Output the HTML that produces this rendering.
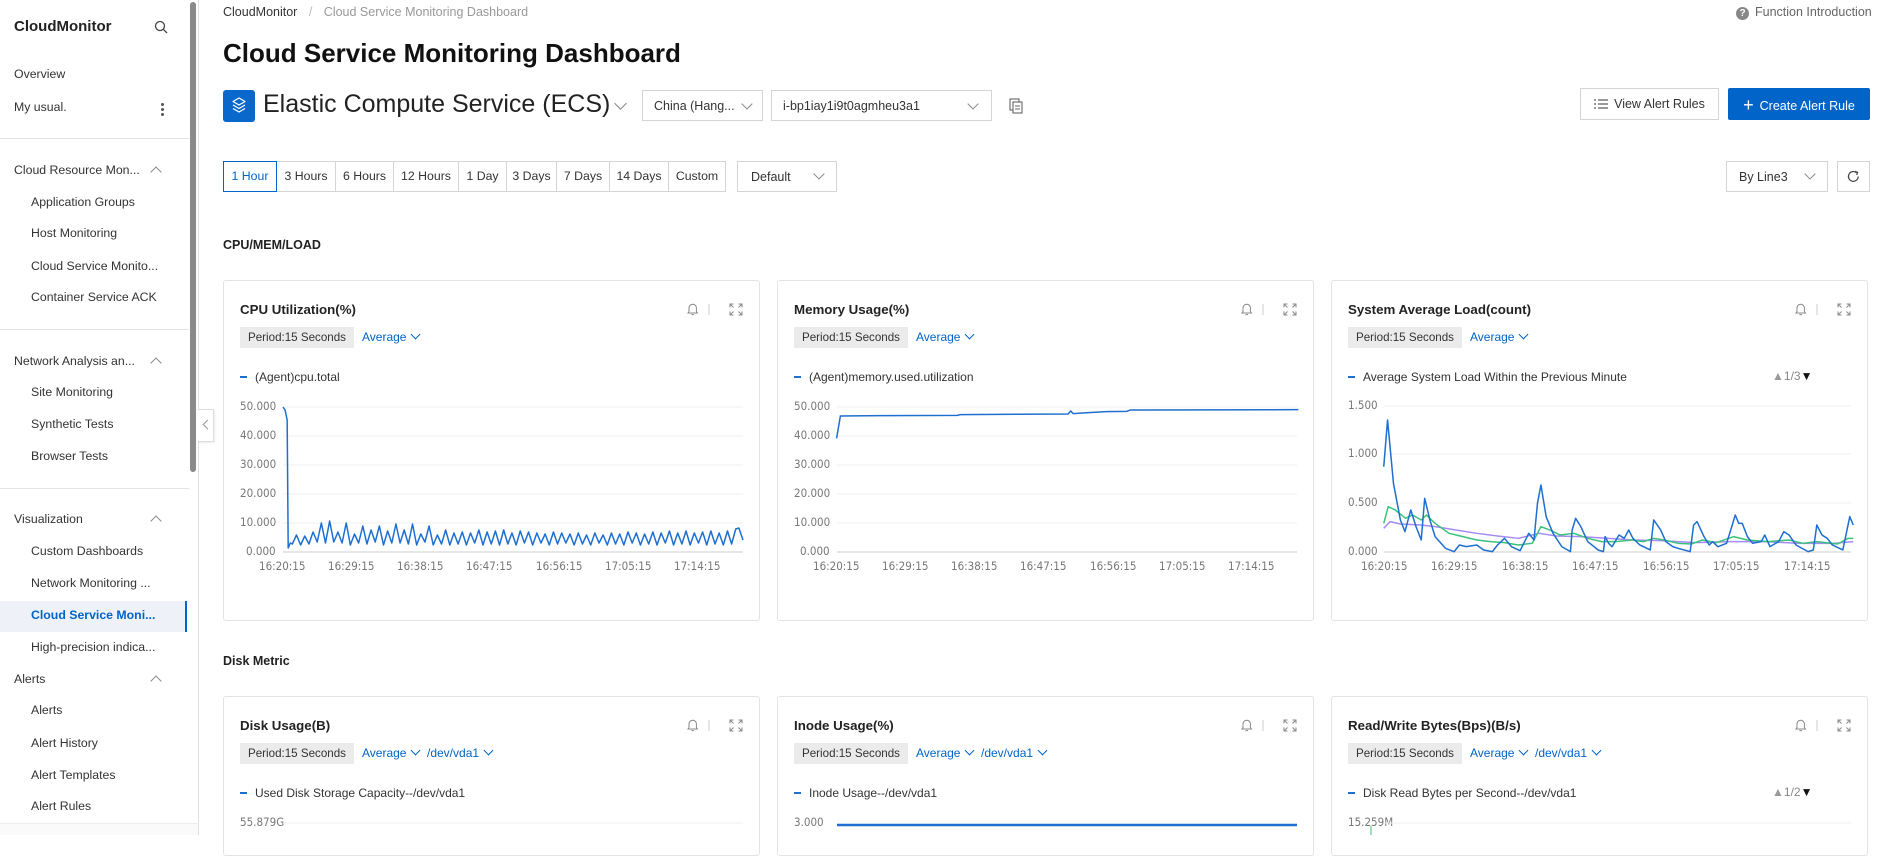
<!DOCTYPE html>
<html><head><meta charset="utf-8">
<style>
*{margin:0;padding:0;box-sizing:border-box}
body{width:1884px;height:835px;overflow:hidden;background:#fff;font-family:"Liberation Sans",Arial,sans-serif;color:#333;position:relative}
.a{position:absolute;white-space:nowrap}
.sb{font-size:12.3px;color:#333}
.sub{left:31px}
.sec{left:14px}
.chev{position:absolute;left:152px;width:8px;height:8px;border-left:1.3px solid #888;border-top:1.3px solid #888;transform:rotate(45deg)}
.hr{position:absolute;left:0;width:189px;height:1px;background:#e3e3e3}
.btn{position:absolute;border:1px solid #d5d5d5;background:#fff;font-size:12.5px;display:flex;align-items:center;color:#333}
.dd{position:absolute;width:8px;height:8px;border-right:1.3px solid #888;border-bottom:1.3px solid #888;transform:rotate(45deg)}
.card{position:absolute;border:1px solid #e3e3e3;border-radius:3px;background:#fff;width:537px}
.ct{position:absolute;left:17px;font-size:13.3px;font-weight:bold;color:#222}
.per{position:absolute;left:17px;height:21px;background:#ebebeb;font-size:11.6px;line-height:21px;padding:0 8px;color:#333}
.avg{position:absolute;font-size:12px;color:#0064c8}
.avg i{display:inline-block;width:7px;height:7px;border-right:1.3px solid #0064c8;border-bottom:1.3px solid #0064c8;transform:rotate(45deg);margin-left:6px;position:relative;top:-3px}
.lg{position:absolute;left:17px;font-size:12px;color:#333}
.lg b{display:inline-block;width:7px;height:2px;background:#1e6fd0;vertical-align:middle;margin-right:8px;position:relative;top:-1px}
.ax{position:absolute;font-size:11.5px;color:#777;font-family:"DejaVu Sans Condensed","Liberation Sans",sans-serif}
.tb{position:absolute;top:161px;height:31px;border:1px solid #d5d5d5;font-size:12.3px;line-height:29px;text-align:center;color:#333;background:#fff}
</style></head><body>

<!-- Sidebar -->
<div class="a" style="left:14px;top:18px;font-size:15px;font-weight:bold;color:#222">CloudMonitor</div>
<svg class="a" style="left:154px;top:20px" width="14" height="14" viewBox="0 0 14 14"><circle cx="6" cy="6" r="4.5" fill="none" stroke="#444" stroke-width="1.3"/><line x1="9.3" y1="9.3" x2="13" y2="13" stroke="#444" stroke-width="1.3"/></svg>
<div class="a sb sec" style="top:67px">Overview</div>
<div class="a sb sec" style="top:100px">My usual.</div>
<div class="a" style="left:161px;top:103px;width:3px;height:3px;border-radius:50%;background:#555;box-shadow:0 5px 0 #555,0 10px 0 #555"></div>
<div class="hr" style="top:138px"></div>
<div class="a sb sec" style="top:163px">Cloud Resource Mon...</div><div class="chev" style="top:168px"></div>
<div class="a sb sub" style="top:195px">Application Groups</div>
<div class="a sb sub" style="top:226px">Host Monitoring</div>
<div class="a sb sub" style="top:259px">Cloud Service Monito...</div>
<div class="a sb sub" style="top:290px">Container Service ACK</div>
<div class="hr" style="top:329px"></div>
<div class="a sb sec" style="top:354px">Network Analysis an...</div><div class="chev" style="top:359px"></div>
<div class="a sb sub" style="top:385px">Site Monitoring</div>
<div class="a sb sub" style="top:417px">Synthetic Tests</div>
<div class="a sb sub" style="top:449px">Browser Tests</div>
<div class="hr" style="top:488px"></div>
<div class="a sb sec" style="top:512px">Visualization</div><div class="chev" style="top:517px"></div>
<div class="a sb sub" style="top:544px">Custom Dashboards</div>
<div class="a sb sub" style="top:576px">Network Monitoring ...</div>
<div class="a" style="left:0;top:601px;width:187px;height:31px;background:#eef1f7;border-right:2px solid #0064c8"></div>
<div class="a sb sub" style="top:608px;color:#0064c8;font-weight:bold">Cloud Service Moni...</div>
<div class="a sb sub" style="top:640px">High-precision indica...</div>
<div class="a sb sec" style="top:672px">Alerts</div><div class="chev" style="top:677px"></div>
<div class="a sb sub" style="top:703px">Alerts</div>
<div class="a sb sub" style="top:736px">Alert History</div>
<div class="a sb sub" style="top:768px">Alert Templates</div>
<div class="a sb sub" style="top:799px">Alert Rules</div>
<div class="a" style="left:0;top:823px;width:198px;height:12px;background:#fafafa;border-top:1px solid #eee"></div>
<div class="a" style="left:190px;top:2px;width:6px;height:470px;background:#8a8a8a;border-radius:3px"></div>
<div class="a" style="left:198px;top:0;width:1px;height:835px;background:#e0e0e0"></div>
<div class="a" style="left:198px;top:409px;width:16px;height:33px;border:1px solid #ddd;border-left:none;background:#fff;box-shadow:1px 1px 2px rgba(0,0,0,.08)"></div>
<div class="a" style="left:204px;top:421px;width:7px;height:7px;border-left:1.3px solid #999;border-bottom:1.3px solid #999;transform:rotate(45deg)"></div>

<!-- Header -->
<div class="a" style="left:223px;top:5px;font-size:12.5px;color:#333">CloudMonitor <span style="color:#bbb;margin:0 8px">/</span> <span style="color:#999">Cloud Service Monitoring Dashboard</span></div>
<div class="a" style="left:1736px;top:5px;font-size:12.5px;color:#666"><span style="display:inline-block;width:13px;height:13px;border-radius:50%;background:#888;color:#fff;font-size:10px;text-align:center;line-height:13px;font-weight:bold;margin-right:6px">?</span>Function Introduction</div>
<div class="a" style="left:223px;top:38px;font-size:26px;font-weight:bold;color:#111">Cloud Service Monitoring Dashboard</div>

<div class="a" style="left:223px;top:90px;width:32px;height:32px;background:#0a67cc;border-radius:3px"></div>
<svg class="a" style="left:229px;top:95px" width="20" height="22" viewBox="0 0 20 22"><g fill="none" stroke="#fff" stroke-width="1.3" stroke-linejoin="round"><path d="M10 3 L16 6.5 L10 10 L4 6.5 Z"/><path d="M4 10 L10 13.5 L16 10"/><path d="M4 13.5 L10 17 L16 13.5"/></g></svg>
<div class="a" style="left:263px;top:90px;font-size:25px;color:#222">Elastic Compute Service (ECS)</div>
<div class="dd" style="left:616px;top:99px;width:9px;height:9px"></div>
<div class="btn" style="left:642px;top:90px;width:121px;height:31px;padding-left:11px">China (Hang...</div><div class="dd" style="left:743px;top:100px"></div>
<div class="btn" style="left:771px;top:90px;width:221px;height:31px;padding-left:11px">i-bp1iay1i9t0agmheu3a1</div><div class="dd" style="left:969px;top:100px"></div>
<svg class="a" style="left:1009px;top:98px" width="15" height="16" viewBox="0 0 15 16"><rect x="1" y="1" width="9" height="11" fill="none" stroke="#666" stroke-width="1.1"/><rect x="4" y="4" width="9" height="11" fill="#fff" stroke="#666" stroke-width="1.1"/><line x1="6" y1="8" x2="11" y2="8" stroke="#666"/><line x1="6" y1="11" x2="11" y2="11" stroke="#666"/></svg>

<div class="btn" style="left:1580px;top:88px;width:139px;height:32px;justify-content:center"><svg width="14" height="12" style="margin-right:6px" viewBox="0 0 14 12"><g stroke="#555" stroke-width="1.2"><line x1="0" y1="2" x2="2" y2="2"/><line x1="4" y1="2" x2="14" y2="2"/><line x1="0" y1="6" x2="2" y2="6"/><line x1="4" y1="6" x2="14" y2="6"/><line x1="0" y1="10" x2="2" y2="10"/><line x1="4" y1="10" x2="14" y2="10"/></g></svg>View Alert Rules</div>
<div class="a" style="left:1728px;top:88px;width:142px;height:32px;background:#0064c8;border-radius:2px;color:#fff;font-size:12.5px;line-height:32px;text-align:center"><span style="font-size:18px;font-weight:300;margin-right:6px;position:relative;top:1px">+</span>Create Alert Rule</div>

<!-- time range -->
<div class="tb" style="left:223px;width:54px;border-color:#0064c8;color:#0064c8;z-index:2">1 Hour</div>
<div class="tb" style="left:276px;width:60px">3 Hours</div>
<div class="tb" style="left:335px;width:59px">6 Hours</div>
<div class="tb" style="left:393px;width:66px">12 Hours</div>
<div class="tb" style="left:458px;width:49px">1 Day</div>
<div class="tb" style="left:506px;width:51px">3 Days</div>
<div class="tb" style="left:556px;width:54px">7 Days</div>
<div class="tb" style="left:609px;width:60px">14 Days</div>
<div class="tb" style="left:668px;width:58px">Custom</div>
<div class="btn" style="left:737px;top:161px;width:100px;height:31px;padding-left:13px">Default</div><div class="dd" style="left:815px;top:170px"></div>
<div class="btn" style="left:1726px;top:161px;width:102px;height:31px;padding-left:12px">By Line3</div><div class="dd" style="left:1806px;top:170px"></div>
<div class="btn" style="left:1837px;top:161px;width:33px;height:31px;justify-content:center"><svg width="15" height="15" viewBox="0 0 16 16"><path d="M13 8 A5.2 5.2 0 1 1 11.3 4.1" fill="none" stroke="#444" stroke-width="1.3"/><path d="M9.5 2.5 L12.3 3.6 L11.5 6.5" fill="none" stroke="#444" stroke-width="1.3"/></svg></div>

<div class="a" style="left:223px;top:238px;font-size:12.5px;font-weight:bold;color:#222">CPU/MEM/LOAD</div>
<div class="a" style="left:223px;top:654px;font-size:12.5px;font-weight:bold;color:#222">Disk Metric</div>

<!-- Cards -->
<div class="card" style="left:223px;top:280px;height:341px"></div>
<div class="card" style="left:777px;top:280px;height:341px"></div>
<div class="card" style="left:1331px;top:280px;height:341px"></div>
<div class="card" style="left:223px;top:696px;height:160px"></div>
<div class="card" style="left:777px;top:696px;height:160px"></div>
<div class="card" style="left:1331px;top:696px;height:160px"></div>

<div class="a" style="left:223px;top:280px;width:537px;height:341px">
 <div class="ct" style="top:22px">CPU Utilization(%)</div>
 <div class="per" style="top:47px">Period:15 Seconds</div><div class="avg" style="left:139px;top:50px">Average<i></i></div>
 <div class="lg" style="top:90px"><b></b>(Agent)cpu.total</div>
</div>
<div class="a" style="left:777px;top:280px;width:537px;height:341px">
 <div class="ct" style="top:22px">Memory Usage(%)</div>
 <div class="per" style="top:47px">Period:15 Seconds</div><div class="avg" style="left:139px;top:50px">Average<i></i></div>
 <div class="lg" style="top:90px"><b></b>(Agent)memory.used.utilization</div>
</div>
<div class="a" style="left:1331px;top:280px;width:537px;height:341px">
 <div class="ct" style="top:22px">System Average Load(count)</div>
 <div class="per" style="top:47px">Period:15 Seconds</div><div class="avg" style="left:139px;top:50px">Average<i></i></div>
 <div class="lg" style="top:90px"><b></b>Average System Load Within the Previous Minute</div>
 <div class="a" style="left:441px;top:89px;font-size:12px;color:#888"><span style="color:#999">▲</span>1/3<span style="color:#111">▼</span></div>
</div>
<div class="a" style="left:223px;top:696px;width:537px;height:140px">
 <div class="ct" style="top:22px">Disk Usage(B)</div>
 <div class="per" style="top:47px">Period:15 Seconds</div><div class="avg" style="left:139px;top:50px">Average<i></i></div><div class="avg" style="left:204px;top:50px">/dev/vda1<i></i></div>
 <div class="lg" style="top:90px"><b></b>Used Disk Storage Capacity--/dev/vda1</div>
 <div class="ax" style="left:17px;top:119px">55.879G</div>
</div>
<div class="a" style="left:777px;top:696px;width:537px;height:140px">
 <div class="ct" style="top:22px">Inode Usage(%)</div>
 <div class="per" style="top:47px">Period:15 Seconds</div><div class="avg" style="left:139px;top:50px">Average<i></i></div><div class="avg" style="left:204px;top:50px">/dev/vda1<i></i></div>
 <div class="lg" style="top:90px"><b></b>Inode Usage--/dev/vda1</div>
 <div class="ax" style="left:17px;top:119px">3.000</div>
</div>
<div class="a" style="left:1331px;top:696px;width:537px;height:140px">
 <div class="ct" style="top:22px">Read/Write Bytes(Bps)(B/s)</div>
 <div class="per" style="top:47px">Period:15 Seconds</div><div class="avg" style="left:139px;top:50px">Average<i></i></div><div class="avg" style="left:204px;top:50px">/dev/vda1<i></i></div>
 <div class="lg" style="top:90px"><b></b>Disk Read Bytes per Second--/dev/vda1</div>
 <div class="a" style="left:441px;top:89px;font-size:12px;color:#888"><span style="color:#999">▲</span>1/2<span style="color:#111">▼</span></div>
 <div class="ax" style="left:17px;top:119px">15.259M</div>
</div>

<svg class="a" style="left:0;top:0" width="1884" height="835">
 <defs>
  <g id="ic">
   <path d="M0 9 L1 7.6 L1 4 A3.7 3.7 0 0 1 8.4 4 L8.4 7.6 L9.4 9 Z M3.4 10.6 L6 10.6" fill="none" stroke="#888" stroke-width="1"/>
   <line x1="21" y1="0" x2="21" y2="11" stroke="#ccc"/>
   <g fill="none" stroke="#888" stroke-width="1"><path d="M42 3.5 L42 0 L45.5 0 M42 0 L45.5 3.5"/><path d="M54 3.5 L54 0 L50.5 0 M54 0 L50.5 3.5"/><path d="M42 7.5 L42 11 L45.5 11 M42 11 L45.5 7.5"/><path d="M54 7.5 L54 11 L50.5 11 M54 11 L50.5 7.5"/></g>
  </g>
 </defs>
 <use href="#ic" x="688" y="304"/><use href="#ic" x="1242" y="304"/><use href="#ic" x="1796" y="304"/>
 <use href="#ic" x="688" y="720"/><use href="#ic" x="1242" y="720"/><use href="#ic" x="1796" y="720"/>

 <g stroke="#efefef" stroke-width="1">
  <line x1="283" y1="407" x2="743" y2="407"/><line x1="283" y1="436" x2="743" y2="436"/><line x1="283" y1="465" x2="743" y2="465"/><line x1="283" y1="494" x2="743" y2="494"/><line x1="283" y1="523" x2="743" y2="523"/>
  <line x1="837" y1="407" x2="1297" y2="407"/><line x1="837" y1="436" x2="1297" y2="436"/><line x1="837" y1="465" x2="1297" y2="465"/><line x1="837" y1="494" x2="1297" y2="494"/><line x1="837" y1="523" x2="1297" y2="523"/>
  <line x1="1384" y1="406" x2="1851" y2="406"/><line x1="1384" y1="454" x2="1851" y2="454"/><line x1="1384" y1="503" x2="1851" y2="503"/>
  <line x1="283" y1="823" x2="743" y2="823"/><line x1="1384" y1="823" x2="1851" y2="823"/>
 </g>
 <g stroke="#ddd" stroke-width="1.5"><line x1="283" y1="552" x2="743" y2="552"/><line x1="837" y1="552" x2="1297" y2="552"/><line x1="1384" y1="552" x2="1851" y2="552"/></g>

 <g transform="translate(-8.1,0) scale(1.036,1)">
 <polyline fill="none" stroke="#1e6fd0" stroke-width="1.5" vector-effect="non-scaling-stroke" stroke-linejoin="round" points="281,407 283,410 285,420 286,548 288,543 290,544 294,535 298,545 302,536 306,544 310,532 314,542 318,523 322,543 326,521 330,542 334,532 338,543 342,523 346,545 350,534 354,543 358,526 362,544 366,530 370,542 374,526 378,545 382,531 386,543 390,524 394,543 398,530 402,544 406,524 410,545 414,534 418,542 422,526 426,545 430,535 434,544 438,530 442,545 446,533 450,544 454,532 458,545 462,533 466,543 470,530 474,545 478,532 482,544 486,531 490,545 494,530 498,544 502,533 506,545 510,531 514,543 518,532 522,545 526,533 530,543 534,534 538,545 542,532 546,544 550,533 554,543 558,534 562,545 566,533 570,544 574,535 578,545 582,533 586,543 590,535 594,545 598,533 602,544 606,534 610,545 614,532 618,543 622,533 626,545 630,534 634,544 638,532 642,545 646,533 650,543 654,531 658,545 662,533 666,544 670,531 674,545 678,533 682,543 686,532 690,545 694,531 698,544 702,533 706,545 710,531 714,544 718,529 721,528 725,540"/>
 </g>
 <g transform="translate(777,280) scale(0.3464,0.3333)"><polyline fill="none" stroke="#1e6fd0" stroke-width="1.5" vector-effect="non-scaling-stroke" points="172,475 183,408 300,407 520,406 530,404 840,402 848,393 855,401 900,398 950,395 1010,394 1020,390 1505,389"/></g>
 <g transform="translate(1331,360) scale(0.347,0.3333)" fill="none" stroke-width="1.5" stroke-linejoin="round">
  <polyline vector-effect="non-scaling-stroke" stroke="#a48cf4" points="152,505 170,485 200,492 260,495 300,500 360,510 420,520 480,528 540,535 600,520 650,528 720,530 800,535 870,540 950,542 1050,548 1150,545 1250,545 1350,550 1450,550 1505,545"/>
  <polyline vector-effect="non-scaling-stroke" stroke="#3cc17a" points="152,490 165,440 185,450 215,475 235,465 260,480 275,465 300,490 340,520 380,530 420,540 460,545 500,548 540,555 580,550 605,500 630,510 660,525 700,520 740,535 780,545 820,545 870,540 900,545 930,535 960,540 1000,550 1040,552 1070,540 1110,548 1160,530 1200,540 1260,545 1320,540 1360,550 1400,545 1460,552 1490,535 1505,535"/>
  <polyline vector-effect="non-scaling-stroke" stroke="#1e6fd0" points="152,320 163,180 180,370 200,480 213,515 230,450 245,500 260,540 270,415 285,480 300,530 330,565 355,575 370,555 390,560 420,555 440,570 465,575 480,555 500,535 520,560 545,572 570,520 585,540 595,430 605,375 620,470 640,520 665,560 690,575 695,510 705,475 720,500 740,545 770,570 785,575 790,530 800,550 810,560 830,525 845,535 858,510 870,535 890,555 920,570 930,480 950,510 965,545 985,560 1000,565 1035,575 1045,495 1055,485 1075,530 1090,555 1100,545 1115,560 1140,550 1155,500 1165,465 1175,490 1185,490 1200,530 1215,550 1240,545 1250,525 1265,560 1290,545 1305,515 1320,525 1340,555 1375,575 1390,570 1400,495 1415,525 1430,535 1445,555 1475,570 1485,520 1495,470 1505,495"/>
 </g>
 <line x1="837" y1="825" x2="1297" y2="825" stroke="#1e6fd0" stroke-width="2.5"/>
 <line x1="1371" y1="826" x2="1371" y2="835" stroke="#3cc17a" stroke-width="1"/>
</svg>

<div class="ax" style="left:240px;top:399px">50.000</div><div class="ax" style="left:240px;top:428px">40.000</div><div class="ax" style="left:240px;top:457px">30.000</div><div class="ax" style="left:240px;top:486px">20.000</div><div class="ax" style="left:240px;top:515px">10.000</div><div class="ax" style="left:246px;top:544px">0.000</div>
<div class="ax" style="left:794px;top:399px">50.000</div><div class="ax" style="left:794px;top:428px">40.000</div><div class="ax" style="left:794px;top:457px">30.000</div><div class="ax" style="left:794px;top:486px">20.000</div><div class="ax" style="left:794px;top:515px">10.000</div><div class="ax" style="left:800px;top:544px">0.000</div>
<div class="ax" style="left:1348px;top:398px">1.500</div><div class="ax" style="left:1348px;top:446px">1.000</div><div class="ax" style="left:1348px;top:495px">0.500</div><div class="ax" style="left:1348px;top:544px">0.000</div>

<div class="ax" style="left:259px;top:559px">16:20:15</div><div class="ax" style="left:328px;top:559px">16:29:15</div><div class="ax" style="left:397px;top:559px">16:38:15</div><div class="ax" style="left:466px;top:559px">16:47:15</div><div class="ax" style="left:536px;top:559px">16:56:15</div><div class="ax" style="left:605px;top:559px">17:05:15</div><div class="ax" style="left:674px;top:559px">17:14:15</div>
<div class="ax" style="left:813px;top:559px">16:20:15</div><div class="ax" style="left:882px;top:559px">16:29:15</div><div class="ax" style="left:951px;top:559px">16:38:15</div><div class="ax" style="left:1020px;top:559px">16:47:15</div><div class="ax" style="left:1090px;top:559px">16:56:15</div><div class="ax" style="left:1159px;top:559px">17:05:15</div><div class="ax" style="left:1228px;top:559px">17:14:15</div>
<div class="ax" style="left:1361px;top:559px">16:20:15</div><div class="ax" style="left:1431px;top:559px">16:29:15</div><div class="ax" style="left:1502px;top:559px">16:38:15</div><div class="ax" style="left:1572px;top:559px">16:47:15</div><div class="ax" style="left:1643px;top:559px">16:56:15</div><div class="ax" style="left:1713px;top:559px">17:05:15</div><div class="ax" style="left:1784px;top:559px">17:14:15</div>
</body></html>
